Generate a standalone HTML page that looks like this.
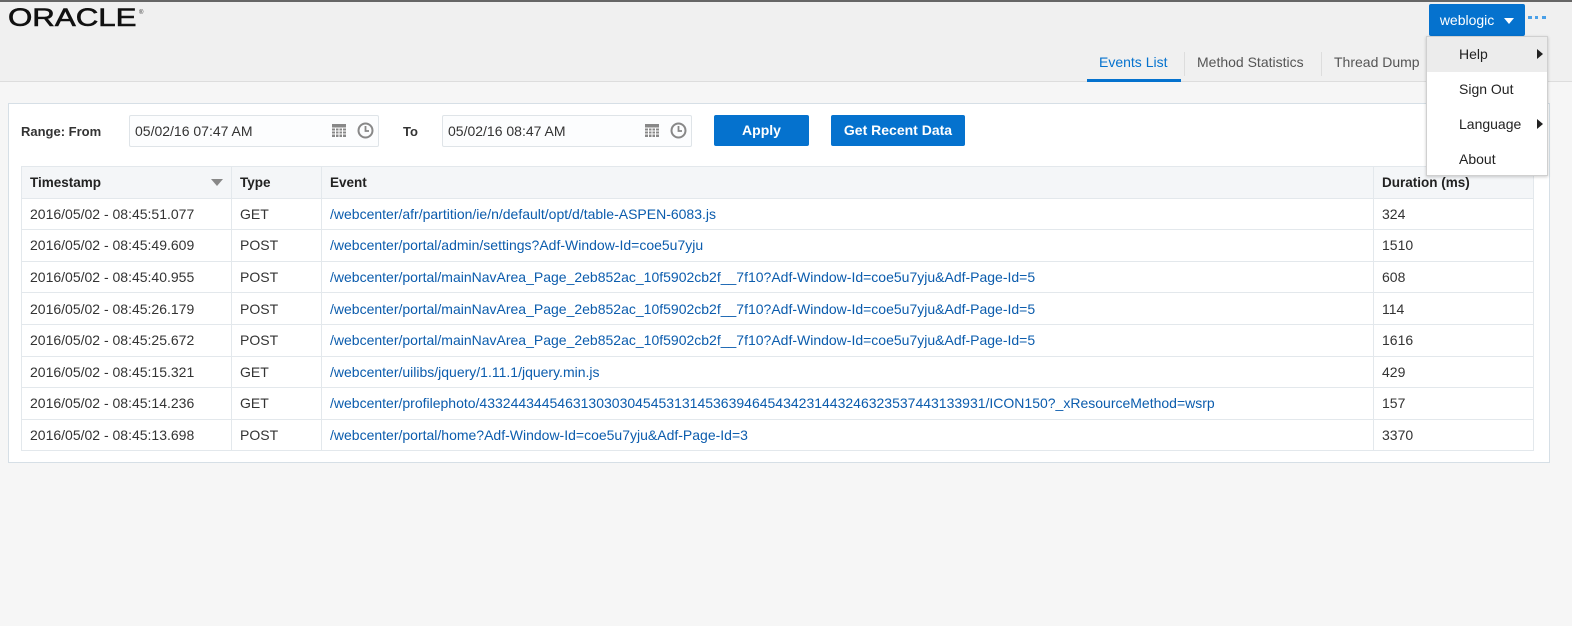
<!DOCTYPE html>
<html style="overflow:hidden;width:1572px"><head><style>
*{margin:0;padding:0;box-sizing:border-box}
body{width:1572px;height:626px;background:#f6f6f6;font-family:"Liberation Sans",Arial,sans-serif;font-size:14px;color:#333;position:relative;overflow:hidden}
.abs{position:absolute}
#hdr{left:0;top:0;width:1572px;height:82px;background:#f0f0f0;border-top:2px solid #666;border-bottom:1px solid #ddd}
.logo{left:8px;top:4px;font-size:25px;font-weight:normal;-webkit-text-stroke:0.6px #111;color:#111;transform:scaleX(1.25);transform-origin:left}
.tab{top:54px;font-size:14px;color:#555}
.sep{top:52px;width:1px;height:24px;background:#ddd}
#panel{left:8px;top:103px;width:1542px;height:360px;background:#fff;border:1px solid #d6dfe6}
.lbl{font-weight:bold;font-size:13px;color:#333}
.inp{height:32px;width:250px;border:1px solid #dfe4e8;background:#fcfdfe;border-radius:2px;padding:7px 5px;font-size:14px;color:#333}
.btn{background:#0572ce;color:#fff;font-weight:bold;font-size:14px;text-align:center;line-height:31px;height:31px;border-radius:2px}
table{border-collapse:collapse;position:absolute;left:21px;top:166px;width:1512px;font-size:14px;table-layout:fixed}
td,th{border:1px solid #e3e8ec;height:31.6px;padding:0 8px;text-align:left;white-space:nowrap;overflow:hidden}
th{background:#f4f6f8;font-weight:bold;color:#222;font-size:13.5px}
td a{color:#0b5cad;text-decoration:none}
#menu{left:1426px;top:36px;width:122px;height:140px;background:#fff;border:1px solid #d0d0d0;box-shadow:0 1px 3px rgba(0,0,0,.2)}
.mi{height:35px;line-height:35px;padding-left:32px;font-size:14px;color:#222;position:relative}
.arr{position:absolute;right:4px;top:12px;width:0;height:0;border-left:6px solid #222;border-top:5px solid transparent;border-bottom:5px solid transparent}
</style></head><body>
<div id="hdr" class="abs"></div>
<div class="abs logo">ORACLE</div>
<div class="abs" style="left:139px;top:10px;font-size:6px;color:#333">®</div>
<div class="abs tab" style="left:1099px;color:#0572ce">Events List</div>
<div class="abs" style="left:1087px;top:79px;width:94px;height:3px;background:#0572ce"></div>
<div class="abs sep" style="left:1184px"></div>
<div class="abs tab" style="left:1197px">Method Statistics</div>
<div class="abs sep" style="left:1321px"></div>
<div class="abs tab" style="left:1334px">Thread Dump</div>
<div class="abs btn" style="left:1429px;top:4px;width:96px;font-weight:normal;height:32px;line-height:32px">weblogic <span style="display:inline-block;width:0;height:0;border-top:6px solid #fff;border-left:5px solid transparent;border-right:5px solid transparent;margin-left:6px;vertical-align:middle"></span></div>
<div class="abs" style="left:1528px;top:16px;width:18px;height:5px;border-top:3px dotted #4aa0e8"></div>
<div id="panel" class="abs"></div>
<div class="abs lbl" style="left:21px;top:124px">Range: From</div>
<div class="abs inp" style="left:129px;top:115px">05/02/16 07:47 AM</div>
<svg class="abs" style="left:331px;top:122px" width="16" height="16"><rect x="1" y="2" width="14" height="13" fill="#888"/><g stroke="#fff" stroke-width="1"><path d="M1 6h14M1 9h14M1 12h14M4.5 6v9M8 6v9M11.5 6v9"/></g></svg>
<svg class="abs" style="left:357px;top:122px" width="17" height="17"><circle cx="8.5" cy="8.5" r="7" fill="none" stroke="#888" stroke-width="2"/><path d="M8.5 4v5h3.5" fill="none" stroke="#888" stroke-width="1.8"/></svg>
<div class="abs lbl" style="left:403px;top:124px">To</div>
<div class="abs inp" style="left:442px;top:115px">05/02/16 08:47 AM</div>
<svg class="abs" style="left:644px;top:122px" width="16" height="16"><rect x="1" y="2" width="14" height="13" fill="#888"/><g stroke="#fff" stroke-width="1"><path d="M1 6h14M1 9h14M1 12h14M4.5 6v9M8 6v9M11.5 6v9"/></g></svg>
<svg class="abs" style="left:670px;top:122px" width="17" height="17"><circle cx="8.5" cy="8.5" r="7" fill="none" stroke="#888" stroke-width="2"/><path d="M8.5 4v5h3.5" fill="none" stroke="#888" stroke-width="1.8"/></svg>
<div class="abs btn" style="left:714px;top:115px;width:95px">Apply</div>
<div class="abs btn" style="left:831px;top:115px;width:134px">Get Recent Data</div>
<table>
<colgroup><col style="width:210px"><col style="width:90px"><col style="width:1052px"><col style="width:160px"></colgroup>
<tr><th>Timestamp<span style="float:right;margin-top:4px;width:0;height:0;border-top:7px solid #888;border-left:6px solid transparent;border-right:6px solid transparent"></span></th><th>Type</th><th>Event</th><th>Duration (ms)</th></tr>
<tr><td>2016/05/02 - 08:45:51.077</td><td>GET</td><td><a>/webcenter/afr/partition/ie/n/default/opt/d/table-ASPEN-6083.js</a></td><td>324</td></tr>
<tr><td>2016/05/02 - 08:45:49.609</td><td>POST</td><td><a>/webcenter/portal/admin/settings?Adf-Window-Id=coe5u7yju</a></td><td>1510</td></tr>
<tr><td>2016/05/02 - 08:45:40.955</td><td>POST</td><td><a>/webcenter/portal/mainNavArea_Page_2eb852ac_10f5902cb2f__7f10?Adf-Window-Id=coe5u7yju&amp;Adf-Page-Id=5</a></td><td>608</td></tr>
<tr><td>2016/05/02 - 08:45:26.179</td><td>POST</td><td><a>/webcenter/portal/mainNavArea_Page_2eb852ac_10f5902cb2f__7f10?Adf-Window-Id=coe5u7yju&amp;Adf-Page-Id=5</a></td><td>114</td></tr>
<tr><td>2016/05/02 - 08:45:25.672</td><td>POST</td><td><a>/webcenter/portal/mainNavArea_Page_2eb852ac_10f5902cb2f__7f10?Adf-Window-Id=coe5u7yju&amp;Adf-Page-Id=5</a></td><td>1616</td></tr>
<tr><td>2016/05/02 - 08:45:15.321</td><td>GET</td><td><a>/webcenter/uilibs/jquery/1.11.1/jquery.min.js</a></td><td>429</td></tr>
<tr><td>2016/05/02 - 08:45:14.236</td><td>GET</td><td><a>/webcenter/profilephoto/43324434454631303030454531314536394645434231443246323537443133931/ICON150?_xResourceMethod=wsrp</a></td><td>157</td></tr>
<tr><td>2016/05/02 - 08:45:13.698</td><td>POST</td><td><a>/webcenter/portal/home?Adf-Window-Id=coe5u7yju&amp;Adf-Page-Id=3</a></td><td>3370</td></tr>
</table>
<div id="menu" class="abs">
<div class="mi" style="background:#ececec">Help<span class="arr"></span></div>
<div class="mi">Sign Out</div>
<div class="mi">Language<span class="arr"></span></div>
<div class="mi">About</div>
</div>
</body></html>
